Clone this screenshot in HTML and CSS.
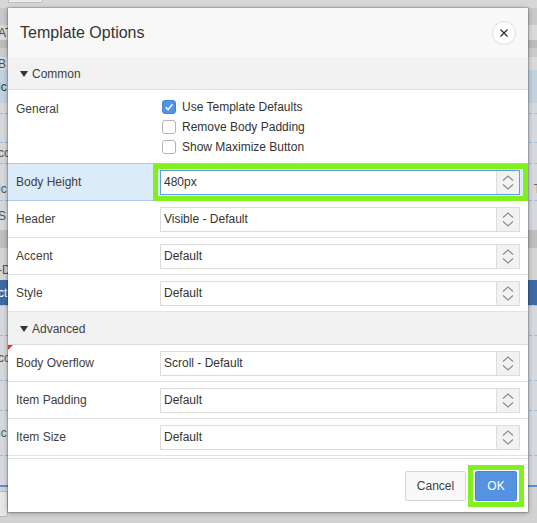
FILE: index.html
```html
<!DOCTYPE html>
<html lang="en">
<head>
<meta charset="utf-8">
<title>Template Options</title>
<link rel="stylesheet" href="styles.css">
</head>
<body>
<div class="backdrop">
  <div class="bd bd-top"><span class="tb-btn"></span></div>
  <div class="bd bd-g1"></div>
  <div class="bd bd-l1"><span class="bt">AT</span><span class="bt-r"></span></div>
  <div class="bd bd-d1"></div>
  <div class="bd bd-g2"></div>
  <div class="bd bd-l2"><span class="bt">B</span></div>
  <div class="bd bd-sel"><span class="bt">lc</span></div>
  <div class="bd bd-grid">
    <div class="gl gl-a"></div>
    <div class="gl gl-b dash"></div>
    <div class="gl gl-c dash"><span class="bt">cc</span></div>
    <div class="gl gl-d dash"><span class="bt">ic</span><span class="bt-r">T</span></div>
    <div class="gl gl-e dash"><span class="bt">S</span></div>
  </div>
  <div class="bd bd-d2"></div>
  <div class="bd bd-l3"><span class="bt">-D</span></div>
  <div class="bd bd-blue"><span class="bt">ct</span></div>
  <div class="bd bd-grid2">
    <div class="gl gl-f dash"></div>
    <div class="gl gl-g dash"><span class="bt">cc</span></div>
    <div class="gl gl-h dash"></div>
    <div class="gl gl-i dash"><span class="bt">ic</span></div>
    <div class="gl gl-j dash"></div>
  </div>
  <div class="bd bd-line"></div>
  <div class="bd bd-bottom"><span class="bb-btn"></span></div>
</div>

<div class="dialog" role="dialog" aria-label="Template Options">
  <div class="dlg-head">
    <h1 class="dlg-title">Template Options</h1>
    <button class="close" type="button" aria-label="Close">
      <svg width="8" height="8" viewBox="0 0 8 8"><path d="M0.5 0.5 L7.5 7.5 M7.5 0.5 L0.5 7.5" stroke="#333" stroke-width="1.4" fill="none"/></svg>
    </button>
  </div>

  <div class="dlg-body">
    <div class="sec-head"><span class="tri"></span>Common</div>

    <div class="row row-general">
      <div class="lbl">General</div>
      <div class="checks">
        <div class="chk"><span class="box on"><svg width="10" height="10" viewBox="0 0 10 10"><path d="M1.8 5.2 L4.1 7.6 L8.4 2.2" stroke="#fff" stroke-width="1.5" fill="none"/></svg></span>Use Template Defaults</div>
        <div class="chk"><span class="box"></span>Remove Body Padding</div>
        <div class="chk"><span class="box"></span>Show Maximize Button</div>
      </div>
    </div>

    <div class="row row-active">
      <div class="lbl">Body Height</div>
      <div class="ctl">
        <div class="field focus ring">
          <span class="val">480px</span>
          <span class="arrows"><svg width="22" height="23" viewBox="0 0 22 23"><path d="M6 9.5 L11 5 L16 9.5 M6 13.5 L11 18 L16 13.5" stroke="#8a8a8a" stroke-width="1.1" fill="none"/></svg></span>
        </div>
      </div>
    </div>

    <div class="row">
      <div class="lbl">Header</div>
      <div class="ctl">
        <div class="field">
          <span class="val">Visible - Default</span>
          <span class="arrows"><svg width="22" height="23" viewBox="0 0 22 23"><path d="M6 9.5 L11 5 L16 9.5 M6 13.5 L11 18 L16 13.5" stroke="#8a8a8a" stroke-width="1.1" fill="none"/></svg></span>
        </div>
      </div>
    </div>

    <div class="row">
      <div class="lbl">Accent</div>
      <div class="ctl">
        <div class="field">
          <span class="val">Default</span>
          <span class="arrows"><svg width="22" height="23" viewBox="0 0 22 23"><path d="M6 9.5 L11 5 L16 9.5 M6 13.5 L11 18 L16 13.5" stroke="#8a8a8a" stroke-width="1.1" fill="none"/></svg></span>
        </div>
      </div>
    </div>

    <div class="row">
      <div class="lbl">Style</div>
      <div class="ctl">
        <div class="field">
          <span class="val">Default</span>
          <span class="arrows"><svg width="22" height="23" viewBox="0 0 22 23"><path d="M6 9.5 L11 5 L16 9.5 M6 13.5 L11 18 L16 13.5" stroke="#8a8a8a" stroke-width="1.1" fill="none"/></svg></span>
        </div>
      </div>
    </div>

    <div class="sec-head"><span class="tri"></span>Advanced</div>

    <div class="row row-marked">
      <div class="lbl">Body Overflow</div>
      <div class="ctl">
        <div class="field">
          <span class="val">Scroll - Default</span>
          <span class="arrows"><svg width="22" height="23" viewBox="0 0 22 23"><path d="M6 9.5 L11 5 L16 9.5 M6 13.5 L11 18 L16 13.5" stroke="#8a8a8a" stroke-width="1.1" fill="none"/></svg></span>
        </div>
      </div>
    </div>

    <div class="row">
      <div class="lbl">Item Padding</div>
      <div class="ctl">
        <div class="field">
          <span class="val">Default</span>
          <span class="arrows"><svg width="22" height="23" viewBox="0 0 22 23"><path d="M6 9.5 L11 5 L16 9.5 M6 13.5 L11 18 L16 13.5" stroke="#8a8a8a" stroke-width="1.1" fill="none"/></svg></span>
        </div>
      </div>
    </div>

    <div class="row">
      <div class="lbl">Item Size</div>
      <div class="ctl">
        <div class="field">
          <span class="val">Default</span>
          <span class="arrows"><svg width="22" height="23" viewBox="0 0 22 23"><path d="M6 9.5 L11 5 L16 9.5 M6 13.5 L11 18 L16 13.5" stroke="#8a8a8a" stroke-width="1.1" fill="none"/></svg></span>
        </div>
      </div>
    </div>
  </div>

  <div class="dlg-foot">
    <button class="btn btn-cancel" type="button">Cancel</button>
    <button class="btn btn-ok" type="button">OK</button>
  </div>
</div>
</body>
</html>
```

FILE: styles.css
```css
* { box-sizing: border-box; }

html, body { margin: 0; padding: 0; }

body {
  width: 537px;
  height: 523px;
  overflow: hidden;
  position: relative;
  background: #d2d2d2;
  font-family: "Liberation Sans", Arial, sans-serif;
  font-size: 12px;
  color: #404040;
}

/* ---------- page behind the dialog ---------- */
.backdrop {
  display: flex;
  flex-direction: column;
  height: 523px;
}

.bd {
  flex: none;
  display: flex;
  justify-content: space-between;
  align-items: center;
  overflow: hidden;
  color: #505050;
  font-size: 12px;
  line-height: 14px;
}

.bt { margin-left: -2px; white-space: nowrap; }
.bt-r { margin-right: -4px; white-space: nowrap; color: #666; }

.bd-top { height: 8px; background: #d7d7d7; align-items: flex-start; }
.tb-btn {
  display: block;
  width: 35px;
  height: 3px;
  margin-left: 8px;
  background: #ececec;
  border: 1px solid #bdbdbd;
  border-top: none;
}
.bd-g1 { height: 17px; background: #c9c9c9; }
.bd-l1 { height: 15px; background: #dadada; }
.bd-d1 { height: 8px; background: #bcbcbc; }
.bd-g2 { height: 9px; background: #cbcbcb; }
.bd-l2 { height: 13px; background: #d9d9d9; }
.bd-sel { height: 33px; background: #c3d1de; color: #333; }

.bd-grid, .bd-grid2 {
  flex-direction: column;
  align-items: stretch;
  justify-content: flex-start;
  background: #d5d8dc;
}
.bd-grid { height: 127px; }
.bd-grid2 { height: 180px; }

.gl {
  flex: none;
  display: flex;
  justify-content: space-between;
  align-items: center;
  color: #555;
}
.dash { border-top: 1px dashed #9fbbdc; }
.gl-a { height: 10px; }
.gl-b { height: 29px; }
.gl-c { height: 21px; }
.gl-d { height: 37px; align-items: flex-end; padding-bottom: 4px; }
.gl-e { height: 30px; }
.gl-f { height: 30px; }
.gl-g { height: 45px; }
.gl-h { height: 30px; }
.gl-i { height: 45px; }
.gl-j { height: 30px; }

.bd-d2 { height: 18px; background: #bebebe; }
.bd-l3 { height: 32px; background: #d4d4d4; align-items: flex-end; padding-bottom: 3px; }
.bd-blue { height: 25px; background: #3e6ba5; color: #fff; }
.bd-line { height: 2px; background: #5b8fd3; }
.bd-bottom { height: 36px; background: #d2d2d2; align-items: flex-start; }
.bb-btn {
  display: block;
  width: 10px;
  height: 26px;
  margin-top: 4px;
  margin-left: -2px;
  background: #e6e6e6;
  border: 1px solid #b9b9b9;
  border-radius: 2px;
}

/* ---------- dialog ---------- */
.dialog {
  position: absolute;
  left: 8px;
  top: 8px;
  width: 520px;
  height: 504px;
  background: #fff;
  display: flex;
  flex-direction: column;
  box-shadow: 0 0 0 1px rgba(0, 0, 0, 0.14), 0 1px 5px rgba(0, 0, 0, 0.35);
}

.dlg-head {
  flex: none;
  height: 49px;
  display: flex;
  align-items: center;
  justify-content: space-between;
  padding: 1px 12px 0;
  background: #f8f8f8;
}

.dlg-title {
  margin: 0;
  font-size: 16px;
  font-weight: normal;
  color: #333;
}

.close {
  width: 24px;
  height: 24px;
  padding: 0;
  border-radius: 50%;
  border: 1px solid #dddddd;
  background: #fff;
  display: flex;
  align-items: center;
  justify-content: center;
}
.close svg { display: block; }

.dlg-body {
  flex: 1;
  overflow: hidden;
}

.sec-head {
  height: 33px;
  display: flex;
  align-items: center;
  padding: 1px 0 0 12px;
  background: #f2f2f2;
  border-bottom: 1px solid #dddddd;
  color: #404040;
}

.tri {
  width: 0;
  height: 0;
  border-left: 4px solid transparent;
  border-right: 4px solid transparent;
  border-top: 6px solid #333;
  margin-right: 4px;
}

.row {
  position: relative;
  height: 37px;
  display: flex;
  align-items: flex-start;
  border-bottom: 1px solid #e3e3e3;
}

.lbl {
  flex: none;
  width: 152px;
  padding-left: 8px;
  line-height: 36px;
  color: #404040;
}

.ctl {
  flex: 1;
  padding-right: 8px;
}

.row-general {
  height: 73px;
  border-bottom: none;
}
.row-general .lbl {
  line-height: 20px;
  padding-top: 9px;
}

.checks {
  flex: 1;
  padding-top: 7px;
  padding-left: 2px;
}

.chk {
  height: 20px;
  display: flex;
  align-items: center;
  color: #333;
}

.box {
  flex: none;
  width: 14px;
  height: 14px;
  margin-right: 6px;
  border: 1px solid #b4b4b4;
  border-radius: 3px;
  background: #fff;
  display: flex;
  align-items: center;
  justify-content: center;
}
.box.on {
  background: #4f94e6;
  border-color: #4086d8;
}
.box svg { display: block; }

.row-active {
  height: 38px;
  background: #dcebf8;
  border-top: 1px solid #a9caee;
  border-bottom: 1px solid #a9caee;
}

.row-marked::before {
  content: "";
  position: absolute;
  left: 0;
  top: 0;
  width: 0;
  height: 0;
  border-top: 5px solid #e8322a;
  border-right: 5px solid transparent;
}

.field {
  position: relative;
  height: 25px;
  margin-top: 6px;
  display: flex;
  align-items: stretch;
  border: 1px solid #dcdcdc;
  background: #fff;
}
.field.focus { border-color: #5f9ee6; }

.val {
  flex: 1;
  padding-left: 3px;
  line-height: 23px;
  color: #333;
}

.arrows {
  flex: none;
  width: 23px;
  background: #f2f2f2;
  border-left: 1px solid #dcdcdc;
}
.arrows svg { display: block; }

.ring::after {
  content: "";
  position: absolute;
  left: -8px;
  right: -9px;
  top: -7px;
  bottom: -7px;
  border: 5px solid #82f01f;
  pointer-events: none;
}

.dlg-foot {
  flex: none;
  height: 54px;
  display: flex;
  justify-content: flex-end;
  align-items: center;
  gap: 9px;
  padding-right: 11px;
  border-top: 1px solid #e0e0e0;
}

.btn {
  height: 30px;
  padding: 0;
  border-radius: 2px;
  font-family: "Liberation Sans", Arial, sans-serif;
  font-size: 12px;
}

.btn-cancel {
  width: 61px;
  background: #f8f8f8;
  border: 1px solid #d6d6d6;
  color: #404040;
}

.btn-ok {
  position: relative;
  width: 42px;
  background: #5592e2;
  border: 1px solid #4a86d4;
  color: #fff;
}
.btn-ok::after {
  content: "";
  position: absolute;
  left: -8px;
  right: -8px;
  top: -7px;
  bottom: -7px;
  border: 5px solid #82f01f;
  pointer-events: none;
}
```
